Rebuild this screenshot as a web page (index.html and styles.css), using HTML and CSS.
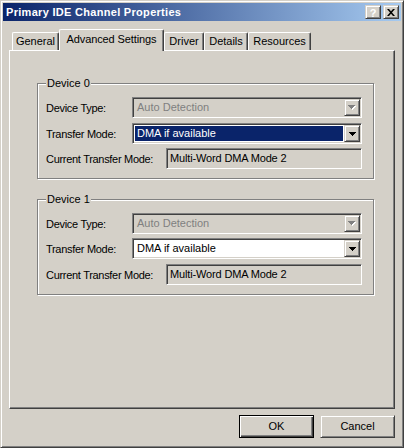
FILE: index.html
```html
<!DOCTYPE html>
<html lang="en">
<head>
  <meta charset="UTF-8">
  <meta name="viewport" content="width=device-width, initial-scale=1.0">
  <title>Primary IDE Channel Properties</title>
  <link rel="stylesheet" href="styles.css">
</head>
<body>
  <!-- dialog window -->
  <div class="window">
    <div class="titlebar">
      <span class="title">Primary IDE Channel Properties</span>
      <div class="caption-buttons">
        <button class="caption-btn raised help">?</button>
        <button class="caption-btn raised">
          <svg width="8" height="7" viewBox="0 0 8 7">
            <path d="M0 0h2l2 2.3 2-2.3h2l-3 3.5 3 3.5h-2l-2-2.3-2 2.3h-2l3-3.5z" fill="#000"/>
          </svg>
        </button>
      </div>
    </div>

    <!-- tab strip -->
    <div class="tabs">
      <div class="tab tab-general">General</div>
      <div class="tab tab-advanced active">Advanced Settings</div>
      <div class="tab tab-driver">Driver</div>
      <div class="tab tab-details">Details</div>
      <div class="tab tab-resources">Resources</div>
    </div>

    <div class="panel">
      <!-- device 0 -->
      <div class="group">
        <span class="group-title">Device 0</span>
        <div class="row">
          <span class="label">Device Type:</span>
          <div class="combo sunken disabled">
            <span class="combo-value">Auto Detection</span>
            <span class="drop raised">
              <svg width="8" height="5" viewBox="0 0 8 5">
                <path d="M1 1H8V2H7V3H6V4H5V5H4V4H3V3H2V2H1Z" fill="#fff"/>
                <path d="M0 0H7V1H6V2H5V3H4V4H3V3H2V2H1V1H0Z" fill="#808080"/>
              </svg>
            </span>
          </div>
        </div>
        <div class="row row-mid">
          <span class="label">Transfer Mode:</span>
          <div class="combo sunken">
            <span class="combo-value selected">DMA if available</span>
            <span class="drop raised">
              <svg width="7" height="4" viewBox="0 0 7 4">
                <path d="M0 0H7V1H6V2H5V3H4V4H3V3H2V2H1V1H0Z" fill="#000"/>
              </svg>
            </span>
          </div>
        </div>
        <div class="row row-last">
          <span class="label label-wide">Current Transfer Mode:</span>
          <div class="field sunken">Multi-Word DMA Mode 2</div>
        </div>
      </div>

      <!-- device 1 -->
      <div class="group group-second">
        <span class="group-title">Device 1</span>
        <div class="row">
          <span class="label">Device Type:</span>
          <div class="combo sunken disabled">
            <span class="combo-value">Auto Detection</span>
            <span class="drop raised">
              <svg width="8" height="5" viewBox="0 0 8 5">
                <path d="M1 1H8V2H7V3H6V4H5V5H4V4H3V3H2V2H1Z" fill="#fff"/>
                <path d="M0 0H7V1H6V2H5V3H4V4H3V3H2V2H1V1H0Z" fill="#808080"/>
              </svg>
            </span>
          </div>
        </div>
        <div class="row row-mid2">
          <span class="label">Transfer Mode:</span>
          <div class="combo sunken">
            <span class="combo-value">DMA if available</span>
            <span class="drop raised">
              <svg width="7" height="4" viewBox="0 0 7 4">
                <path d="M0 0H7V1H6V2H5V3H4V4H3V3H2V2H1V1H0Z" fill="#000"/>
              </svg>
            </span>
          </div>
        </div>
        <div class="row row-last2">
          <span class="label label-wide">Current Transfer Mode:</span>
          <div class="field sunken">Multi-Word DMA Mode 2</div>
        </div>
      </div>
    </div>

    <!-- dialog buttons -->
    <div class="actions">
      <button class="btn btn-default">OK</button>
      <button class="btn raised">Cancel</button>
    </div>
  </div>
</body>
</html>
```

FILE: styles.css
```css
/* base */
* {
  box-sizing: border-box;
}

body {
  margin: 0;
  font-family: "Liberation Sans", Arial, sans-serif;
  font-size: 11px;
  color: #000;
  background: #d4d0c8;
}

button {
  font: inherit;
  color: inherit;
  margin: 0;
  padding: 0;
  background: #d4d0c8;
}

/* classic 3d edges */
.raised {
  border: 1px solid;
  border-color: #d4d0c8 #404040 #404040 #d4d0c8;
  box-shadow: inset 1px 1px #fff, inset -1px -1px #808080;
  background: #d4d0c8;
}

.sunken {
  border: 1px solid;
  border-color: #808080 #fff #fff #808080;
  box-shadow: inset 1px 1px #404040, inset -1px -1px #d4d0c8;
}

/* window frame */
.window {
  width: 404px;
  height: 448px;
  display: flex;
  flex-direction: column;
  border: 1px solid;
  border-color: #d4d0c8 #404040 #404040 #d4d0c8;
  box-shadow: inset 1px 1px #fff, inset -1px -1px #808080;
  padding: 2px;
  background: #d4d0c8;
}

.titlebar {
  flex: none;
  height: 18px;
  display: flex;
  align-items: center;
  justify-content: space-between;
  padding: 0 2px 0 3px;
  background: linear-gradient(to right, #0a246a, #a6caf0);
  color: #fff;
}

.title {
  font-weight: bold;
  letter-spacing: 0.3px;
}

.caption-buttons {
  display: flex;
  gap: 2px;
}

.caption-btn {
  width: 16px;
  height: 14px;
  display: flex;
  align-items: center;
  justify-content: center;
}

.help {
  font-weight: bold;
  font-size: 11px;
  line-height: 12px;
  padding-top: 1px;
}

/* tabs */
.tabs {
  flex: none;
  height: 21px;
  display: flex;
  align-items: flex-end;
  margin: 8px 6px 0;
  padding-left: 3px;
}

.tab {
  height: 18px;
  border-top: 1px solid #fff;
  border-left: 1px solid #fff;
  border-right: 1px solid #404040;
  border-radius: 2px 2px 0 0;
  box-shadow: inset -1px 0 #808080;
  text-align: center;
  line-height: 17px;
  background: #d4d0c8;
}

.tab-general { width: 47px; }
.tab-advanced { width: 105px; }
.tab-driver { width: 40px; }
.tab-details { width: 44px; }
.tab-resources { width: 63px; }

.tab.active {
  height: 22px;
  margin-bottom: -1px;
  position: relative;
  z-index: 1;
  line-height: 18px;
  letter-spacing: -0.1px;
}

/* property page */
.panel {
  flex: 1;
  margin: 0 6px;
  border: 1px solid;
  border-color: #fff #404040 #404040 #fff;
  box-shadow: inset -1px -1px #808080;
  padding: 32px 0 0 27px;
}

.group {
  position: relative;
  width: 337px;
  border: 1px solid #808080;
  box-shadow: inset 1px 1px #fff, 1px 1px #fff;
  padding: 13px 11px 9px 8px;
}

.group-second {
  margin-top: 20px;
}

.group-title {
  position: absolute;
  top: -7px;
  left: 8px;
  padding: 0 1px;
  line-height: 13px;
  background: #d4d0c8;
}

.row {
  height: 21px;
  display: flex;
  align-items: center;
}

.row-mid { margin-top: 5px; }
.row-last { margin-top: 4px; }
.row-mid2 { margin-top: 4px; }
.row-last2 { margin-top: 5px; }

.label {
  flex: none;
  width: 86px;
  letter-spacing: -0.3px;
  white-space: nowrap;
}

.label-wide {
  width: 120px;
}

/* combo box */
.combo {
  flex: 1;
  height: 21px;
  display: flex;
  padding: 1px;
  background: #fff;
}

.combo.disabled {
  background: #d4d0c8;
  color: #808080;
}

.combo-value {
  flex: 1;
  padding-left: 3px;
  line-height: 17px;
  white-space: nowrap;
}

.combo-value.selected {
  margin: 1px;
  padding-left: 2px;
  line-height: 15px;
  background: #0a246a;
  color: #fff;
}

.drop {
  flex: none;
  width: 16px;
  height: 17px;
  display: flex;
  align-items: center;
  justify-content: center;
}

.drop svg {
  display: block;
}

/* read-only edit */
.field {
  flex: 1;
  height: 21px;
  padding-left: 3px;
  line-height: 19px;
  background: #d4d0c8;
  white-space: nowrap;
  letter-spacing: -0.15px;
}

/* bottom buttons */
.actions {
  flex: none;
  display: flex;
  justify-content: flex-end;
  gap: 6px;
  padding: 6px 6px 7px 0;
}

.btn {
  width: 75px;
  height: 23px;
  text-align: center;
  line-height: 19px;
}

.btn-default {
  border: 1px solid #000;
  box-shadow: inset 1px 1px #fff, inset -1px -1px #404040, inset -2px -2px #808080;
}
```
